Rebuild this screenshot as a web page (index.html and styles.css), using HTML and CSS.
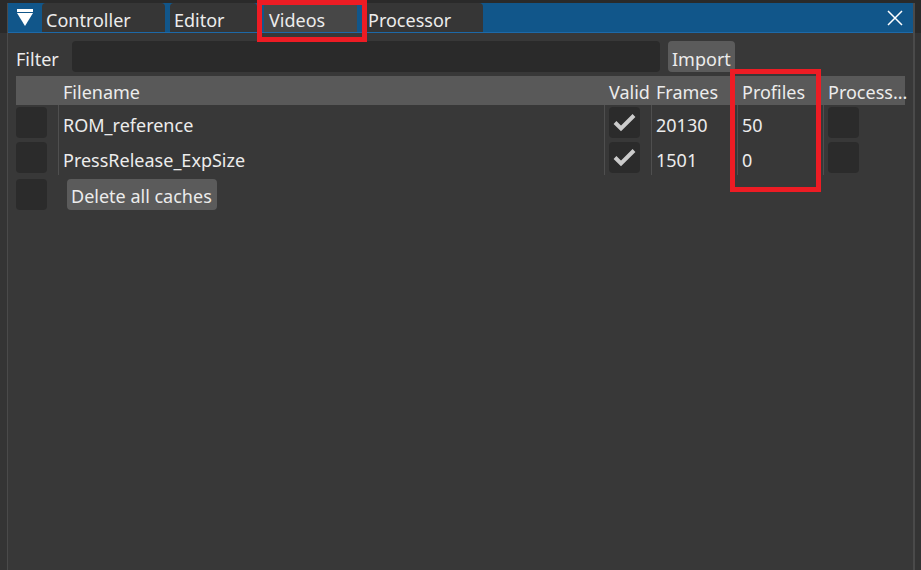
FILE: index.html
```html
<!DOCTYPE html>
<html lang="en">
<head>
    <meta charset="UTF-8">
    <meta name="viewport" content="width=device-width, initial-scale=1.0">
    <title>Videos</title>
    <link rel="stylesheet" href="styles.css">
</head>
<body>
    <div class="frame">
        <div class="window">
            <!-- Title bar with docked tabs -->
            <div class="titlebar">
                <div class="menu-btn">
                    <svg width="16" height="17" viewBox="0 0 16 17">
                        <rect x="0" y="0" width="16" height="3" fill="#ffffff"/>
                        <polygon points="0,4 16,4 8,17" fill="#ffffff"/>
                    </svg>
                </div>
                <div class="tabs">
                    <div class="tab">Controller</div>
                    <div class="tab">Editor</div>
                    <div class="tab active">Videos</div>
                    <div class="tab">Processor</div>
                </div>
                <div class="close-btn">
                    <svg width="16" height="16" viewBox="0 0 16 16">
                        <path d="M1 1 L15 15 M15 1 L1 15" stroke="#ffffff" stroke-width="1.5" fill="none"/>
                    </svg>
                </div>
            </div>

            <div class="content">
                <!-- Filter -->
                <div class="filter-row">
                    <div class="label">Filter</div>
                    <div class="input"></div>
                    <div class="btn">Import</div>
                </div>

                <!-- Video table -->
                <div class="table">
                    <div class="thead">
                        <div class="th"></div>
                        <div class="th">Filename</div>
                        <div class="th">Valid</div>
                        <div class="th">Frames</div>
                        <div class="th">Profiles</div>
                        <div class="th">Process...</div>
                    </div>
                    <div class="trow">
                        <div class="td first"><div class="checkbox"></div></div>
                        <div class="td">ROM_reference</div>
                        <div class="td box"><div class="checkbox"><svg width="31" height="31" viewBox="0 0 31 31"><path d="M6 15.5 L12 21.5 L25 8.5" stroke="#cbcbcb" stroke-width="4" fill="none"/></svg></div></div>
                        <div class="td">20130</div>
                        <div class="td">50</div>
                        <div class="td box"><div class="checkbox"></div></div>
                    </div>
                    <div class="trow">
                        <div class="td first"><div class="checkbox"></div></div>
                        <div class="td">PressRelease_ExpSize</div>
                        <div class="td box"><div class="checkbox"><svg width="31" height="31" viewBox="0 0 31 31"><path d="M6 15.5 L12 21.5 L25 8.5" stroke="#cbcbcb" stroke-width="4" fill="none"/></svg></div></div>
                        <div class="td">1501</div>
                        <div class="td">0</div>
                        <div class="td box"><div class="checkbox"></div></div>
                    </div>
                </div>

                <div class="actions">
                    <div class="checkbox"></div>
                    <div class="btn delete">Delete all caches</div>
                </div>
            </div>
        </div>

        <!-- Annotation boxes -->
        <div class="mark mark-tab"></div>
        <div class="mark mark-col"></div>
    </div>
</body>
</html>
```

FILE: styles.css
```css
body {
    margin: 0;
    padding: 0;
    font-family: "Noto Sans", sans-serif;
    font-size: 18px;
    color: #ececec;
    background-color: #343434;
    overflow: hidden;
}
.frame {
    position: relative;
    height: 570px;
    padding: 3px 0 0 7px;
    box-sizing: border-box;
    background: linear-gradient(#2a2a2a 0, #2a2a2a 33px, #343434 33px);
}
.window {
    width: 905px;
    height: 567px;
    border-left: 1px solid #4a4a4a;
    border-right: 2px solid #4a4a4a;
    background-color: #383838;
}
/* Title bar */
.titlebar {
    display: flex;
    height: 29px;
    background-color: #11568a;
    border-bottom: 1px solid #1d69a8;
}
.menu-btn {
    width: 34px;
    display: flex;
    align-items: center;
    justify-content: center;
}
.menu-btn svg {
    display: block;
}
.tabs {
    display: flex;
    gap: 5px;
}
.tab {
    height: 29px;
    box-sizing: border-box;
    padding: 6px 0 0 4px;
    line-height: 23px;
    background-color: #363636;
    border-radius: 4px 4px 0 0;
    white-space: nowrap;
}
.tab:nth-child(1) { width: 123px; }
.tab:nth-child(2) { width: 87px; }
.tab:nth-child(3) { width: 93px; }
.tab:nth-child(4) { width: 119px; }
.tab.active {
    background-color: #474747;
    margin: 0 2px;
    padding-left: 5px;
}
.close-btn {
    margin-left: auto;
    margin-right: 10px;
    display: flex;
    align-items: center;
}
.close-btn svg {
    display: block;
}
/* Content */
.content {
    padding: 8px 8px 0 8px;
}
.filter-row {
    display: flex;
    gap: 8px;
    height: 31px;
}
.label {
    width: 48px;
    padding-top: 5px;
    line-height: 26px;
}
.input {
    width: 588px;
    background-color: #2a2a2a;
    border-radius: 4px;
}
.btn {
    height: 31px;
    box-sizing: border-box;
    padding: 5px 4px 0 4px;
    line-height: 26px;
    background-color: #5b5b5b;
    border-radius: 4px;
    white-space: nowrap;
}
/* Table */
.table {
    margin-top: 4px;
}
.thead,
.trow {
    display: grid;
    grid-template-columns: 42px 546px 47px 86px 86px 82px;
}
.thead {
    height: 29px;
    background-color: #595959;
}
.th {
    padding: 4px 0 0 5px;
    line-height: 25px;
    white-space: nowrap;
}
.th:first-child {
    padding-left: 0;
}
.trow {
    height: 35px;
}
.td {
    border-left: 1px solid #4f4f4f;
    padding: 6px 0 0 4px;
    line-height: 28px;
    white-space: nowrap;
}
.td.first {
    border-left: none;
    padding: 2px 0 0 0;
}
.td.box {
    padding-top: 2px;
}
.checkbox {
    width: 31px;
    height: 31px;
    background-color: #2b2b2b;
    border-radius: 4px;
}
.checkbox svg {
    display: block;
}
.actions {
    display: flex;
    margin-top: 4px;
    height: 31px;
}
.btn.delete {
    margin-left: 20px;
    padding: 4px 5px 0 4px;
    line-height: 27px;
}
/* Red highlight boxes */
.mark {
    position: absolute;
    box-sizing: border-box;
    border: 5px solid #ed1c24;
}
.mark-tab {
    left: 257px;
    top: 0;
    width: 110px;
    height: 42px;
}
.mark-col {
    left: 730px;
    top: 69px;
    width: 91px;
    height: 123px;
}
```
